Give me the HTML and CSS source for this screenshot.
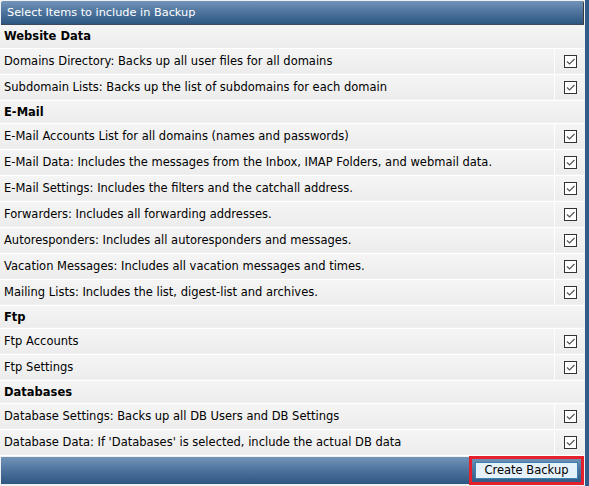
FILE: index.html
```html
<!DOCTYPE html>
<html>
<head>
<meta charset="utf-8">
<link rel="stylesheet" href="styles.css">
</head>
<body>
<div class="panel">
  <div class="titlebar">Select Items to include in Backup</div>
  <table class="items">
    <tr class="section"><td colspan="2">Website Data</td></tr>
    <tr><td class="label">Domains Directory: Backs up all user files for all domains</td><td class="check"><span class="cb"><svg viewBox="0 0 11 11" width="11" height="11"><path d="M2 5.5 L4.5 8 L9.5 3" fill="none" stroke="#555" stroke-width="1.2"/></svg></span></td></tr>
    <tr><td class="label">Subdomain Lists: Backs up the list of subdomains for each domain</td><td class="check"><span class="cb"><svg viewBox="0 0 11 11" width="11" height="11"><path d="M2 5.5 L4.5 8 L9.5 3" fill="none" stroke="#555" stroke-width="1.2"/></svg></span></td></tr>
    <tr class="section"><td colspan="2">E-Mail</td></tr>
    <tr><td class="label">E-Mail Accounts List for all domains (names and passwords)</td><td class="check"><span class="cb"><svg viewBox="0 0 11 11" width="11" height="11"><path d="M2 5.5 L4.5 8 L9.5 3" fill="none" stroke="#555" stroke-width="1.2"/></svg></span></td></tr>
    <tr><td class="label">E-Mail Data: Includes the messages from the Inbox, IMAP Folders, and webmail data.</td><td class="check"><span class="cb"><svg viewBox="0 0 11 11" width="11" height="11"><path d="M2 5.5 L4.5 8 L9.5 3" fill="none" stroke="#555" stroke-width="1.2"/></svg></span></td></tr>
    <tr><td class="label">E-Mail Settings: Includes the filters and the catchall address.</td><td class="check"><span class="cb"><svg viewBox="0 0 11 11" width="11" height="11"><path d="M2 5.5 L4.5 8 L9.5 3" fill="none" stroke="#555" stroke-width="1.2"/></svg></span></td></tr>
    <tr><td class="label">Forwarders: Includes all forwarding addresses.</td><td class="check"><span class="cb"><svg viewBox="0 0 11 11" width="11" height="11"><path d="M2 5.5 L4.5 8 L9.5 3" fill="none" stroke="#555" stroke-width="1.2"/></svg></span></td></tr>
    <tr><td class="label">Autoresponders: Includes all autoresponders and messages.</td><td class="check"><span class="cb"><svg viewBox="0 0 11 11" width="11" height="11"><path d="M2 5.5 L4.5 8 L9.5 3" fill="none" stroke="#555" stroke-width="1.2"/></svg></span></td></tr>
    <tr><td class="label">Vacation Messages: Includes all vacation messages and times.</td><td class="check"><span class="cb"><svg viewBox="0 0 11 11" width="11" height="11"><path d="M2 5.5 L4.5 8 L9.5 3" fill="none" stroke="#555" stroke-width="1.2"/></svg></span></td></tr>
    <tr><td class="label">Mailing Lists: Includes the list, digest-list and archives.</td><td class="check"><span class="cb"><svg viewBox="0 0 11 11" width="11" height="11"><path d="M2 5.5 L4.5 8 L9.5 3" fill="none" stroke="#555" stroke-width="1.2"/></svg></span></td></tr>
    <tr class="section"><td colspan="2">Ftp</td></tr>
    <tr><td class="label">Ftp Accounts</td><td class="check"><span class="cb"><svg viewBox="0 0 11 11" width="11" height="11"><path d="M2 5.5 L4.5 8 L9.5 3" fill="none" stroke="#555" stroke-width="1.2"/></svg></span></td></tr>
    <tr><td class="label">Ftp Settings</td><td class="check"><span class="cb"><svg viewBox="0 0 11 11" width="11" height="11"><path d="M2 5.5 L4.5 8 L9.5 3" fill="none" stroke="#555" stroke-width="1.2"/></svg></span></td></tr>
    <tr class="section"><td colspan="2">Databases</td></tr>
    <tr><td class="label">Database Settings: Backs up all DB Users and DB Settings</td><td class="check"><span class="cb"><svg viewBox="0 0 11 11" width="11" height="11"><path d="M2 5.5 L4.5 8 L9.5 3" fill="none" stroke="#555" stroke-width="1.2"/></svg></span></td></tr>
    <tr><td class="label">Database Data: If 'Databases' is selected, include the actual DB data</td><td class="check"><span class="cb"><svg viewBox="0 0 11 11" width="11" height="11"><path d="M2 5.5 L4.5 8 L9.5 3" fill="none" stroke="#555" stroke-width="1.2"/></svg></span></td></tr>
  </table>
  <div class="footer">
    <div class="highlight"><button class="btn" type="button">Create Backup</button></div>
  </div>
</div>
</body>
</html>
```

FILE: styles.css
```css
html, body {
  margin: 0;
  padding: 0;
  height: 100%;
}
body {
  background: #2f5c88;
  font-family: "DejaVu Sans", Verdana, sans-serif;
  font-size: 11.5px;
  color: #000;
}
.panel {
  width: 585px;
  height: 100%;
  background: #f0f0f0;
  padding-top: 1px;
  box-sizing: border-box;
}
.titlebar {
  margin: 0 1px 0 1px;
  height: 24px;
  line-height: 24px;
  padding-left: 6px;
  font-size: 11.3px;
  color: #fff;
  background: linear-gradient(#7394b9 0%, #50769f 45%, #2d5681 100%);
  border-right: 1px solid #3a3a3a;
  border-bottom: 1px solid #3a4a5a;
  border-radius: 2px 2px 0 0;
  box-sizing: border-box;
}
.items {
  width: 584px;
  border-collapse: collapse;
  border-spacing: 0;
}
.items td {
  padding: 0 0 0 4px;
  height: 26px;
  border-bottom: 1px solid #fff;
  background: linear-gradient(#f5f5f5, #ececec);
  box-sizing: border-box;
  white-space: nowrap;
}
.items tr.section td {
  height: 23px;
  font-weight: bold;
  font-size: 11.5px;
}
.items td.check {
  width: 30px;
  padding: 0;
  border-left: 1px solid #fff;
  text-align: center;
  vertical-align: middle;
}
.cb {
  display: inline-block;
  width: 13px;
  height: 13px;
  box-sizing: border-box;
  border: 1px solid #333;
  background: #fff;
  vertical-align: middle;
  margin-left: 2px;
}
.cb svg {
  display: block;
}
.footer {
  margin: 1px 1px 0 1px;
  height: 27px;
  display: flex;
  justify-content: flex-end;
  align-items: center;
  background: linear-gradient(#7394b9 0%, #50769f 45%, #2d5681 100%);
  border-right: 1px solid #3a3a3a;
}
.highlight {
  border: 3px solid #e3202b;
  padding: 3px;
  margin-right: -1px;
  height: 29px;
  box-sizing: border-box;
  display: flex;
}
.btn {
  width: 103px;
  height: 17px;
  padding: 0;
  margin: 0;
  border: 1px solid #3c7fb1;
  background: #e5f1fb;
  font-family: "DejaVu Sans", Verdana, sans-serif;
  font-size: 11.5px;
  line-height: 15px;
  color: #000;
}
```
